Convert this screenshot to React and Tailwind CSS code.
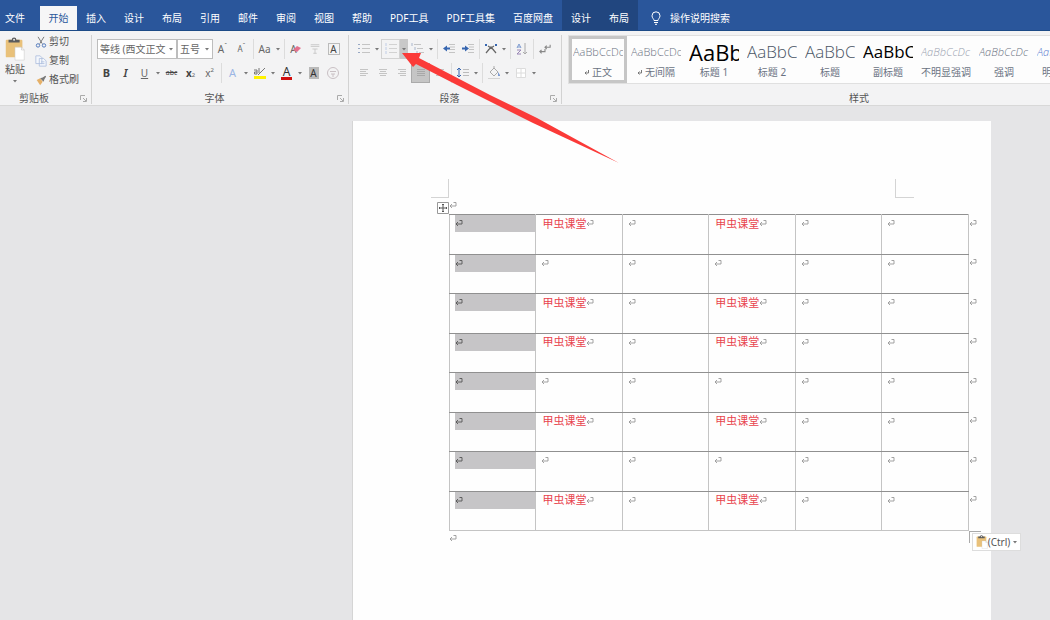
import React from 'react';
import clsx from 'clsx';

const tabs = ['插入', '设计', '布局', '引用', '邮件', '审阅', '视图', '帮助', 'PDF工具', 'PDF工具集', '百度网盘'];

const styleItems = [
  { name: '正文', sample: 'AaBbCcDc', look: 'text-[11px] font-light text-gray-500', mark: true, active: true },
  { name: '无间隔', sample: 'AaBbCcDc', look: 'text-[11px] font-light text-gray-500', mark: true },
  { name: '标题 1', sample: 'AaBb', look: 'text-[22px] font-medium text-black' },
  { name: '标题 2', sample: 'AaBbC', look: 'text-[17px] font-light text-gray-600' },
  { name: '标题', sample: 'AaBbC', look: 'text-[17px] font-light text-gray-600' },
  { name: '副标题', sample: 'AaBbC', look: 'text-[17px] font-medium text-black' },
  { name: '不明显强调', sample: 'AaBbCcDc', look: 'text-[11px] font-light italic text-gray-400' },
  { name: '强调', sample: 'AaBbCcDc', look: 'text-[11px] font-light italic text-gray-500' },
  { name: '明显强调', sample: 'AaBbCcDc', look: 'text-[11px] font-light italic text-[#5b7bd0]' },
];

const word = '甲虫课堂';
const rows = [true, false, true, true, false, true, false, true];

const Caret = () => (
  <svg width="4" height="3" viewBox="0 0 4 3">
    <path d="M0 0h4L2 2.5z" fill="#777" />
  </svg>
);

const DropButton = ({ label, active }) => (
  <button
    aria-label={label}
    className={clsx('flex h-5 w-2 items-center justify-center', active && 'bg-[#c8c8c8]')}
  >
    <Caret />
  </button>
);

const Tool = ({ label, className, children }) => (
  <button aria-label={label} className={clsx('flex h-5 w-[19px] items-center justify-center', className)}>
    {children}
  </button>
);

const Icon = ({ children, size = 14 }) => (
  <svg width={size} height={size} viewBox="0 0 14 14" fill="none" stroke="#999" strokeWidth="1">
    {children}
  </svg>
);

const Divider = () => (
  <div className="flex w-1 justify-center">
    <div className="h-5 w-px bg-[#dcdcdc]" />
  </div>
);

const Launcher = () => (
  <svg width="7" height="7" viewBox="0 0 7 7" fill="none" stroke="#aaa">
    <path d="M.5 5V.5H5M3 3l3 3M6.5 3v3.5H3" />
  </svg>
);

const Group = ({ title, className, titleClass, children }) => (
  <section className={clsx('flex', className)}>
    <div className="flex flex-1 flex-col">
      <div className="flex-1">{children}</div>
      <div className="flex h-3 items-center pr-1">
        <span className={clsx('flex-1 text-center leading-3', titleClass)}>{title}</span>
        <button aria-label={`${title}设置`}><Launcher /></button>
      </div>
    </div>
    <div className="mt-1 w-px bg-[#d2d2d2]" />
  </section>
);

const PasteIcon = ({ className }) => (
  <svg className={className} viewBox="0 0 22 26">
    <rect x="1" y="3" width="18" height="19" rx="1" fill="#e9c17a" />
    <path d="M4 6V3h3.500a2.500 2.500 0 0 1 5 0H16v3z" fill="#5c5c5c" />
    <circle cx="10" cy="3" r="1" fill="#f3f3f3" />
    <path d="M11 11h7l3 3v11H11z" fill="#fff" stroke="#ccc" strokeWidth=".6" />
    <path d="M18 11v3h3" fill="none" stroke="#bbb" strokeWidth=".6" />
  </svg>
);

const ReturnMark = ({ dark }) => (
  <svg className="shrink-0" width="8" height="7" viewBox="0 0 8 7" fill="none" stroke={dark ? '#555' : '#999'} strokeWidth=".9">
    <path d="M4.500 .5h2.500v3.500H1M3 2l-2 2 2 2" />
  </svg>
);

const alignLines = {
  left: 'M3 3.500h8M3 5.500h6M3 7.500h8M3 9.500h6',
  center: 'M3 3.500h8M4 5.500h6M3 7.500h8M4 9.500h6',
  right: 'M3 3.500h8M5 5.500h6M3 7.500h8M5 9.500h6',
  justify: 'M3 3.500h8M3 5.500h8M3 7.500h8M3 9.500h8',
};

const AlignIcon = ({ kind, color = '#c4c4c4' }) => (
  <Icon><path d={alignLines[kind]} stroke={color} /></Icon>
);

const TabBar = () => (
  <nav className="flex h-[31px] items-end overflow-hidden border-b border-[#1d4b87] bg-[#2a569b] whitespace-nowrap text-white">
    <button className="h-6 w-10 pr-[10px] text-center">文件</button>
    <button className="h-6 w-[37px] bg-[#f6f6f7] text-[#2a569b]">开始</button>
    {tabs.map((tab) => (
      <button key={tab} className="h-6 px-[9px]">{tab}</button>
    ))}
    <div className="flex h-full items-end bg-[#21467f]">
      <button className="h-6 px-[9px]">设计</button>
      <button className="h-6 px-[9px]">布局</button>
    </div>
    <button className="flex h-6 items-center gap-2 pl-3">
      <svg width="12" height="14" viewBox="0 0 12 14" fill="none" stroke="#fff">
        <path d="M4 9.500C4 8 2 7 2 4.800a4 4 0 0 1 8 0C10 7 8 8 8 9.500zM4 11.500h4M5 13.300h2" />
      </svg>
      操作说明搜索
    </button>
  </nav>
);

const ClipboardGroup = () => (
  <Group title="剪贴板" className="w-[92px]" titleClass="pr-3">
    <div className="flex gap-2 pt-px pl-[3px]">
      <button className="flex w-6 flex-col items-center">
        <PasteIcon className="mt-[5px] h-6 w-[22px]" />
        <span className="leading-4">粘贴</span>
        <span className="flex h-2 items-center"><Caret /></span>
      </button>
      <div className="flex flex-col">
        <button className="flex h-[19px] items-center gap-[2px]">
          <Icon size={12}>
            <path d="M3.500 1l5 8M10.500 1l-5 8" stroke="#666" />
            <circle cx="3.500" cy="11" r="2" stroke="#3f6cb5" />
            <circle cx="10.500" cy="11" r="2" stroke="#3f6cb5" />
          </Icon>
          剪切
        </button>
        <button className="flex h-[19px] items-center gap-[2px]">
          <Icon size={12}>
            <path d="M1 1h5l2 2v7H1zM5 4h5l3 3v6H5z" fill="#f4f7fc" stroke="#afc0de" />
            <path d="M7 8h4M7 10h4" stroke="#afc0de" />
          </Icon>
          复制
        </button>
        <button className="flex h-[19px] items-center gap-[2px]">
          <Icon size={12}>
            <path d="M2 7l4-2 3 4-3 4z" fill="#e5b068" stroke="none" />
            <path d="M6 5l4 4 1-3 2-3-1-1-3 2z" fill="#777" stroke="none" />
          </Icon>
          格式刷
        </button>
      </div>
    </div>
  </Group>
);

const Picker = ({ label, value, className }) => (
  <div className={clsx('relative', className)}>
    <select
      aria-label={label}
      className="h-5 w-full appearance-none rounded-none border border-[#bdbdbd] bg-white pr-2 pl-[2px] text-[10px]"
    >
      <option>{value}</option>
    </select>
    <span className="pointer-events-none absolute inset-y-0 right-1 flex items-center"><Caret /></span>
  </div>
);

const FontGroup = () => (
  <Group title="字体" className="w-[257px]">
    <div className="flex flex-col gap-1 pt-2 pl-[5px] text-[#666]">
      <div className="flex items-center">
        <Picker label="字体" value="等线 (西文正文" className="w-20" />
        <Picker label="字号" value="五号" className="w-9" />
        <Tool label="增大字号"><span className="text-[10px]">A</span><sup className="text-[7px]">ˆ</sup></Tool>
        <Tool label="减小字号"><span className="text-[8px]">A</span><sup className="text-[7px]">ˇ</sup></Tool>
        <Divider />
        <Tool label="更改大小写"><span className="text-[10px]">Aa</span></Tool>
        <DropButton label="大小写选项" />
        <Divider />
        <Tool label="清除格式">
          <span className="text-[10px]">A</span>
          <svg className="-ml-1" width="8" height="8" viewBox="0 0 8 8">
            <path d="M0 5l4-4 4 2-4 4z" fill="#e4718d" />
          </svg>
        </Tool>
        <Tool label="拼音指南">
          <Icon size={12}><path d="M2 2h10M2 4h10M4 7h6M7 7v5M5 12h4" stroke="#c4c4c4" /></Icon>
        </Tool>
        <Tool label="字符边框"><span className="h-3 w-3 border border-[#bbb] text-[10px] leading-[10px] text-[#444]">A</span></Tool>
      </div>
      <div className="flex items-center">
        <Tool label="加粗"><b className="text-[11px] text-[#444]">B</b></Tool>
        <Tool label="倾斜"><i className="text-[11px] font-semibold text-[#444]">I</i></Tool>
        <Tool label="下划线"><u className="text-[10px]">U</u></Tool>
        <DropButton label="下划线选项" />
        <Tool label="删除线"><s className="text-[7px] text-[#444]">abc</s></Tool>
        <Tool label="下标"><b className="text-[10px] text-[#444]">x</b><sub className="text-[6px]">2</sub></Tool>
        <Tool label="上标"><span className="text-[10px]">x</span><sup className="text-[6px]">2</sup></Tool>
        <Divider />
        <Tool label="文本效果"><span className="text-[11px] text-[#9bb6e4]">A</span></Tool>
        <DropButton label="文本效果选项" />
        <Tool label="突出显示">
          <Icon>
            <path d="M1 11.500h12" stroke="#fff200" strokeWidth="3" />
            <path d="M5 9l7-7M1 4h3v4H1.500V6H4M6 2v5" stroke="#777" />
          </Icon>
        </Tool>
        <DropButton label="突出显示选项" />
        <Tool label="字体颜色">
          <span className="border-b-[3px] border-[#d00f0f] px-[2px] text-xs leading-[11px] text-[#333]">A</span>
        </Tool>
        <DropButton label="字体颜色选项" />
        <Tool label="字符底纹"><span className="h-3 w-[10px] bg-[#b9b9b9] text-[10px] leading-3 text-[#333]">A</span></Tool>
        <Tool label="带圈字符">
          <Icon><circle cx="7" cy="7" r="5.500" stroke="#c9c0c4" /><path d="M4 5.500h6M5 8h4M7 8v3" stroke="#c9c0c4" /></Icon>
        </Tool>
      </div>
    </div>
  </Group>
);

const ParagraphGroup = () => (
  <Group title="段落" className="w-[213px]">
    <div className="flex flex-col gap-1 pt-2 pl-[5px]">
      <div className="flex items-center">
        <Tool label="项目符号">
          <Icon><path d="M5 2.500h8M5 6.500h8M5 10.500h8" stroke="#c4c4c4" /><path d="M1 2.500h2M1 6.500h2M1 10.500h2" stroke="#98a8c4" /></Icon>
        </Tool>
        <DropButton label="项目符号选项" />
        <Tool label="编号" className="border border-[#d2d2d2]">
          <Icon><path d="M5 2.500h8M5 6.500h8M5 10.500h8" stroke="#d2d2d2" /><path d="M2 1v3M2 5v3M2 9v3" stroke="#c0cde6" /></Icon>
        </Tool>
        <DropButton label="编号选项" active />
        <Tool label="多级列表">
          <Icon><path d="M3 2.500h7M6 6.500h6M8 10.500h5" stroke="#c4c4c4" /><path d="M1 1v3M4 5v3M6 9v3" stroke="#a9b6cc" /></Icon>
        </Tool>
        <DropButton label="多级列表选项" />
        <Divider />
        <Tool label="减少缩进">
          <Icon><path d="M7 2.500h6M8 5h5M8 7.500h5M7 10.500h6" stroke="#c4c4c4" /><path d="M1 6.500l4-3v2h3v2H5v2z" fill="#3766b0" stroke="none" /></Icon>
        </Tool>
        <Tool label="增加缩进">
          <Icon><path d="M7 2.500h6M8 5h5M8 7.500h5M7 10.500h6" stroke="#c4c4c4" /><path d="M8 6.500l-4-3v2H1v2h3v2z" fill="#3766b0" stroke="none" /></Icon>
        </Tool>
        <Divider />
        <Tool label="中文版式">
          <Icon><path d="M2 11l5-6 5 6M4 4l6 4M10 4L4 8" stroke="#666" strokeWidth="1.200" /><path d="M1 3h2M11 3h2" stroke="#3766b0" strokeWidth="2" /></Icon>
        </Tool>
        <DropButton label="中文版式选项" />
        <Divider />
        <Tool label="排序">
          <Icon><path d="M2 6l2-4 2 4M2.500 5h3" stroke="#7d9bd0" /><path d="M2 8h4l-4 4h4" stroke="#9a86b5" /><path d="M10 1v11M8 10l2 2 2-2" stroke="#aaa" /></Icon>
        </Tool>
        <Divider />
        <Tool label="显示编辑标记">
          <Icon size={12}><path d="M13 2v3H7M9 3L7 5l2 2M7 7v3H1M3 8l-2 2 2 2" stroke="#888" strokeWidth="1.300" /></Icon>
        </Tool>
      </div>
      <div className="flex items-center">
        <Tool label="左对齐"><AlignIcon kind="left" /></Tool>
        <Tool label="居中"><AlignIcon kind="center" /></Tool>
        <Tool label="右对齐"><AlignIcon kind="right" /></Tool>
        <Tool label="两端对齐" className="border border-[#aaa] bg-[#c5c5c5]"><AlignIcon kind="justify" color="#a8a8a8" /></Tool>
        <Tool label="分散对齐"><AlignIcon kind="justify" /></Tool>
        <Divider />
        <Tool label="行距">
          <Icon><path d="M7 3.500h6M7 6.500h6M7 9.500h6" stroke="#bbb" /><path d="M3 2v9M1 4l2-2 2 2M1 9l2 2 2-2" stroke="#3766b0" /></Icon>
        </Tool>
        <DropButton label="行距选项" />
        <Divider />
        <Tool label="底纹">
          <Icon><path d="M3 6l4-4 4 4-4 4zM7 2V0" stroke="#aaa" /><path d="M11 6l2 3v1h-2z" fill="#7d9bd0" stroke="none" /><path d="M1 12.500h12" stroke="#d4d4d4" /></Icon>
        </Tool>
        <DropButton label="底纹选项" />
        <Tool label="边框">
          <Icon><path d="M2.500 2.500h9v9h-9zM7 2.500v9M2.500 7h9" fill="#fff" stroke="#dcdcdc" /></Icon>
        </Tool>
        <DropButton label="边框选项" />
      </div>
    </div>
  </Group>
);

const StylesGroup = () => (
  <section className="flex min-w-0 flex-1 flex-col overflow-hidden pt-1 pl-[6px]">
    <div className="flex flex-1">
      <div className="flex h-[49px] border border-[#e0e0e0] bg-[#fdfdfd]">
        {styleItems.map((item) => (
          <button
            key={item.name}
            className={clsx(
              'flex w-[58px] shrink-0 flex-col items-center border-[3px] px-px pt-px',
              item.active ? 'border-[#c6c6c6]' : 'border-transparent'
            )}
          >
            <span className={clsx('h-6 w-[50px] overflow-hidden text-left font-["Open_Sans"] leading-6 whitespace-nowrap', item.look)}>
              {item.sample}
            </span>
            <span className="flex items-center gap-[2px] leading-4 whitespace-nowrap text-gray-500">
              {item.mark && (
                <svg width="6" height="5" viewBox="0 0 6 5" fill="none" stroke="#777">
                  <path d="M4.500 0v3H1M2.500 1.500L1 3l1.500 1.500" />
                </svg>
              )}
              {item.name}
            </span>
          </button>
        ))}
      </div>
    </div>
    <div className="h-3 pl-[281px] leading-3">样式</div>
  </section>
);

const DocTable = () => (
  <table className="h-[317px] w-full table-fixed border-collapse">
    <colgroup>
      <col /><col /><col /><col /><col /><col />
      <col className="w-[10px]" />
    </colgroup>
    <tbody>
      {rows.map((filled, i) => (
        <tr key={i} className="group">
          {[0, 1, 2, 3, 4, 5].map((col) => (
            <td
              key={col}
              className="border border-x-[#c4c4c4] border-y-[#909090] p-0 pl-[5px] align-top group-last:border-b-[#c4c4c4]"
            >
              <div className={clsx('flex h-[17px] items-center', col === 0 && 'bg-[#c6c5c7]')}>
                {filled && (col === 1 || col === 3) && (
                  <span className="pl-px text-[11px] leading-4 text-[#e8434d]">{word}</span>
                )}
                <ReturnMark dark={col === 0} />
              </div>
            </td>
          ))}
          <td className="p-0 align-top">
            <div className="flex h-[17px] items-center"><ReturnMark /></div>
          </td>
        </tr>
      ))}
    </tbody>
  </table>
);

const App = () => (
  <div className="flex min-h-screen flex-col overflow-hidden bg-[#e5e5e7] font-['Noto_Sans','Noto_Sans_CJK_SC',sans-serif] text-[10px] text-[#555]">
    <header className="relative">
      <TabBar />
      <div className="flex h-[75px] border-b border-[#d8d8d8] bg-[#f3f3f4] pb-px">
        <ClipboardGroup />
        <FontGroup />
        <ParagraphGroup />
        <StylesGroup />
      </div>
      {/* red pointer towards the numbering menu */}
      <svg className="pointer-events-none absolute top-[53px] left-[402px]" width="220" height="112" viewBox="0 0 220 112">
        <path d="M0 0L19 0L17 5L88 42L135 65L217 110L131 70L55 32L14 11L11 14Z" fill="#fb3a38" />
      </svg>
    </header>

    <main className="flex flex-1 pt-[15px] pr-[59px] pl-[352px]">
      <article className="flex-1 border-l border-[#d5d5d5] bg-[#fefefe] pt-[58px]">
        <div className="flex justify-between pr-[77px] pl-[78px]">
          <div className="h-[19px] w-[18px] border-r border-b border-[#d4d4d4]" />
          <div className="h-[19px] w-[19px] border-b border-l border-[#d4d4d4]" />
        </div>
        <div className="flex h-4 items-end pl-[84px]">
          <svg width="12" height="12" viewBox="0 0 12 12" fill="none" stroke="#555">
            <path d="M.5.5h11v11H.5z" fill="#fff" stroke="#999" />
            <path d="M6 2v8M2 6h8M5 3l1-1 1 1M5 9l1 1 1-1M3 5L2 6l1 1M9 5l1 1-1 1" />
          </svg>
          <div className="self-start pt-1"><ReturnMark /></div>
        </div>
        <div className="relative pr-[13px] pl-24">
          <DocTable />
          <div className="absolute right-[10px] bottom-0 translate-y-full">
            <div className="h-3 w-3 border-t border-l border-[#aaa]" />
          </div>
          <button className="absolute -right-[30px] -bottom-5 flex h-[18px] w-[49px] items-center justify-center border border-[#ddd] bg-white">
            <PasteIcon className="h-[14px] w-3" />
            <span>(Ctrl)</span>
            <span className="pl-[3px]"><Caret /></span>
          </button>
        </div>
        <div className="pt-1 pl-24"><ReturnMark /></div>
      </article>
    </main>
  </div>
);

export default App;
